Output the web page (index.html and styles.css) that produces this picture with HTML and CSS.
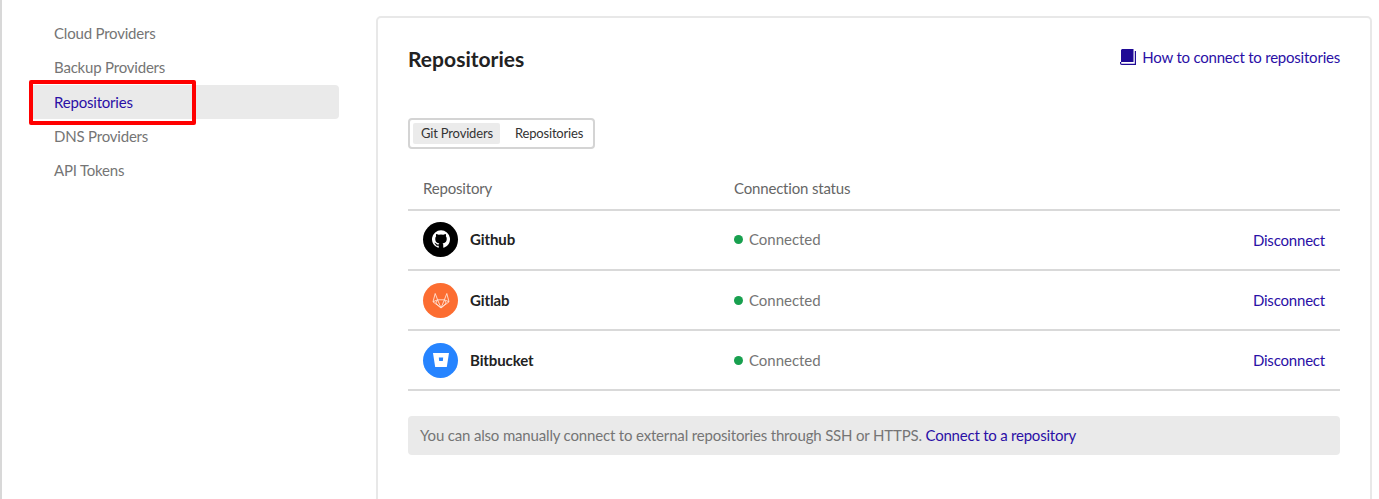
FILE: index.html
```html
<!DOCTYPE html>
<html lang="en">
<head>
<meta charset="utf-8">
<title>Repositories</title>
<link rel="stylesheet" href="styles.css">
</head>
<body>
<div class="page">
  <nav class="sidebar">
    <a class="nav-item">Cloud Providers</a>
    <a class="nav-item">Backup Providers</a>
    <a class="nav-item active">Repositories<span class="highlight"></span></a>
    <a class="nav-item">DNS Providers</a>
    <a class="nav-item">API Tokens</a>
  </nav>
  <main class="panel">
    <header class="panel-head">
      <h1>Repositories</h1>
      <a class="help">
        <svg class="book" width="16" height="16" viewBox="0 0 16 16"><path fill="#1f0a96" d="M2 0h11.500v13H1V1z"/><path fill="none" stroke="#1f0a96" stroke-width="1.200" d="M.6 13v1.200c0 .7.4 1.200 1.200 1.200h13.600V2"/></svg>
        How to connect to repositories
      </a>
    </header>
    <div class="tabs">
      <span class="tab selected">Git Providers</span>
      <span class="tab">Repositories</span>
    </div>
    <div class="row head">
      <span class="col-name">Repository</span>
      <span class="col-status">Connection status</span>
    </div>
    <div class="row">
      <div class="col-name">
        <span class="logo github">
          <svg width="18" height="18" viewBox="0 0 16 16"><path fill="#fff" d="M8 .2a8 8 0 0 0-2.500 15.600c.4.1.5-.2.5-.4v-1.400c-2.200.5-2.700-1-2.700-1-.4-.9-.9-1.200-.9-1.200-.7-.5.1-.5.1-.5.8.1 1.200.8 1.200.8.7 1.200 1.900.9 2.300.7.1-.5.300-.9.500-1.100-1.800-.2-3.600-.9-3.600-4 0-.9.300-1.600.8-2.100-.1-.2-.4-1 .1-2.100 0 0 .7-.2 2.200.8a7.500 7.500 0 0 1 4 0c1.500-1 2.200-.8 2.200-.8.4 1.100.2 1.900.1 2.100.5.500.8 1.200.8 2.100 0 3.100-1.900 3.800-3.700 4 .3.300.6.800.6 1.500v2.200c0 .2.100.5.500.4A8 8 0 0 0 8 .2z"/></svg>
        </span>
        <b>Github</b>
      </div>
      <div class="col-status"><i class="dot"></i>Connected</div>
      <a class="action">Disconnect</a>
    </div>
    <div class="row">
      <div class="col-name">
        <span class="logo gitlab">
          <svg width="18" height="17" viewBox="0 0 18 17" fill="none" stroke="#ffe3d6" stroke-width=".9" stroke-linejoin="round"><path d="M9 16 1 9.800 3.200 1.500l2.400 6.300h6.800l2.400-6.300L17 9.800z"/><path d="M1 9.800l4.600-2L9 16l3.400-8.200L17 9.800M5.600 7.800 3.800 11 9 16l5.200-5-1.800-3.200"/></svg>
        </span>
        <b>Gitlab</b>
      </div>
      <div class="col-status"><i class="dot"></i>Connected</div>
      <a class="action">Disconnect</a>
    </div>
    <div class="row">
      <div class="col-name">
        <span class="logo bitbucket">
          <svg width="18" height="16" viewBox="0 0 18 16"><path fill="#fff" d="M1 1h16l-2.200 14H3.200z"/><path fill="#2684ff" d="M6.800 5.500h4.400l-.4 3.500H7.200z"/></svg>
        </span>
        <b>Bitbucket</b>
      </div>
      <div class="col-status"><i class="dot"></i>Connected</div>
      <a class="action">Disconnect</a>
    </div>
    <p class="note">You can also manually connect to external repositories through SSH or HTTPS. <a>Connect to a repository</a></p>
  </main>
</div>
</body>
</html>
```

FILE: styles.css
```css
* { box-sizing: border-box; }
html, body { margin: 0; height: 100%; overflow: hidden; background: #fff; }
body { font-family: Lato, "Noto Sans", sans-serif; font-size: 15px; color: #757575; }
.page { display: flex; height: 499px; overflow: hidden; border-left: 2px solid #d8d8d8; }
.sidebar { width: 347px; margin-left: 27px; padding-top: 16px; flex: none; display: flex; flex-direction: column; }
.nav-item { position: relative; height: 34.300px; line-height: 34.300px; padding-left: 25px; border-radius: 4px; letter-spacing: -.2px; }
.nav-item.active { width: 310px; background: #eaeaea; color: #2a10a6; }
.highlight { position: absolute; left: 0; top: -5px; width: 167px; height: 45px; border: 4px solid #f00; border-radius: 2px; }
.panel { width: 996px; height: 520px; flex: none; margin-top: 16px; padding: 0 30px; border: 2px solid #e8e8e8; border-radius: 5px; }
.panel-head { display: flex; justify-content: space-between; align-items: center; height: 80px; }
h1 { margin: 0; font-size: 21px; font-weight: 700; color: #222; letter-spacing: .03px; }
.help { display: flex; align-items: center; gap: 6px; color: #2a10a6; letter-spacing: -.22px; margin-top: -3px; }
.tabs { display: flex; align-items: center; height: 31px; margin-top: 20px; padding: 0 3px; width: 187px; border: 2px solid #d4d4d4; border-radius: 4px; font-size: 13px; color: #333; letter-spacing: -.18px; white-space: nowrap; }
.tab { height: 21px; line-height: 21px; padding: 0 8px; border-radius: 2px; }
.tab.selected { background: #ebebeb; width: 87px; }
.tab + .tab { margin-left: 7px; }
.row { display: flex; align-items: center; height: 60px; padding: 0 15px; border-bottom: 2px solid #d9d9d9; }
.row.head { height: 40px; margin-top: 22px; padding-bottom: 4px; color: #666; letter-spacing: -.18px; }
.row.head + .row { padding-bottom: 2px; }
.row.head + .row .action { margin-top: 2px; }
.col-name { display: flex; align-items: center; gap: 12px; width: 311px; flex: none; }
b { font-weight: 700; color: #222; letter-spacing: -.1px; font-size: 15px; }
.logo { width: 35px; height: 35px; border-radius: 50%; display: flex; align-items: center; justify-content: center; flex: none; }
.github { background: #000; }
.gitlab { background: #fc6d31; }
.bitbucket { background: #2684ff; }
.col-status { display: flex; align-items: center; letter-spacing: -.03px; }
.row.head .col-status { letter-spacing: -.18px; }
.dot { width: 9px; height: 9px; border-radius: 50%; background: #18a04f; margin-right: 6px; }
.action { margin-left: auto; color: #2a10a6; letter-spacing: -.2px; }
.note { height: 39px; line-height: 39px; margin: 25px 0 0; padding: 0 12px; background: #eaeaea; border-radius: 4px; letter-spacing: -.17px; }
.note a { color: #2a10a6; letter-spacing: -.22px; }
```
